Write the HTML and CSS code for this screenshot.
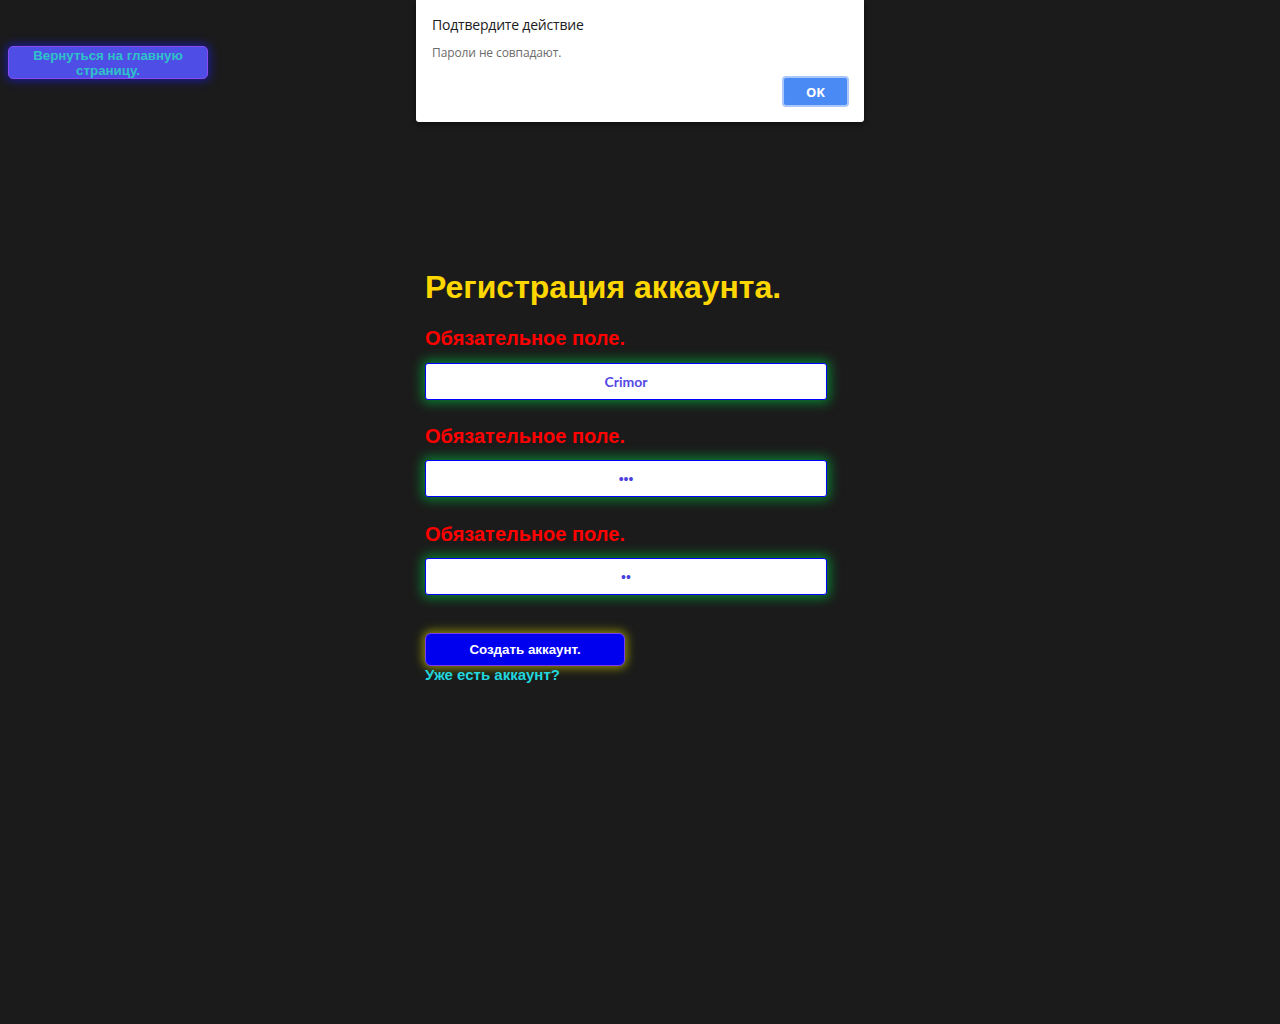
FILE: index.html
```html
<!DOCTYPE html>
<html lang="ru">
<head>
<meta charset="utf-8">
<title>Регистрация аккаунта</title>
<link rel="stylesheet" href="styles.css">
</head>
<body>
<div class="dialog">
  <div class="dialog-title">Подтвердите действие</div>
  <div class="dialog-msg">Пароли не совпадают.</div>
  <div class="dialog-actions"><button class="dialog-ok">OK</button></div>
</div>
<div class="page">
  <button class="back-btn">Вернуться на главную страницу.</button>
  <main class="form">
    <h1 class="title">Регистрация аккаунта.</h1>
    <div class="label">Обязательное поле.</div>
    <input class="field field-first" type="text" value="Crimor">
    <div class="label">Обязательное поле.</div>
    <input class="field field-pass field-mid" type="password" value="123">
    <div class="label">Обязательное поле.</div>
    <input class="field field-pass field-last" type="password" value="12">
    <button class="submit">Создать аккаунт.</button>
    <a class="login-link" href="#">Уже есть аккаунт?</a>
  </main>
</div>
</body>
</html>
```
FILE: styles.css
```css
html, body {
  margin: 0;
  padding: 0;
  background: #1b1b1b;
  font-family: "Liberation Sans", Arial, sans-serif;
}
.page {
  padding: 46px 0 0 8px;
  display: flex;
  flex-direction: column;
  align-items: flex-start;
}
.back-btn {
  width: 200px;
  height: 33px;
  padding: 0 4px;
  background: #4e4ee6;
  border: 1px solid #8a4cf2;
  border-radius: 5px;
  color: #2ec2c8;
  font-family: "Liberation Sans", Arial, sans-serif;
  font-weight: bold;
  font-size: 13.33px;
  line-height: 15px;
  box-shadow: 0 0 10px 2px rgba(30, 30, 255, 0.55);
}
.form {
  margin: 190px 0 0 417px;
  display: flex;
  flex-direction: column;
  align-items: flex-start;
  width: 402px;
}
.title {
  margin: 0;
  color: #ffd700;
  font-size: 32px;
  line-height: 37px;
  font-weight: bold;
}
.label {
  color: #ff0000;
  font-size: 20px;
  font-weight: bold;
  line-height: 24px;
  margin-top: 0;
}
.title + .label {
  margin-top: 20px;
}
.field {
  box-sizing: border-box;
  width: 402px;
  height: 37px;
  border: 1px solid #0000ff;
  border-radius: 3px;
  background: #ffffff;
  text-align: center;
  color: #5448e4;
  font-family: Lato, "Open Sans", sans-serif;
  font-weight: bold;
  font-size: 14px;
  outline: none;
  box-shadow: 0 0 12px 3px rgba(0, 170, 60, 0.7);
}
.field-first {
  margin: 13px 0 24px;
}
.field-mid {
  margin: 12px 0 25px;
}
.field-last {
  margin: 12px 0 38px;
}
.field-pass {
  font-family: "Liberation Sans", Arial, sans-serif;
  font-weight: normal;
  color: #4a3ee0;
}
.submit {
  width: 200px;
  height: 33px;
  background: #0000ee;
  border: 1px solid #7a3cf0;
  border-radius: 6px;
  color: #ffffff;
  font-family: "Liberation Sans", Arial, sans-serif;
  font-weight: bold;
  font-size: 13.33px;
  box-shadow: 0 0 10px 2px rgba(170, 170, 0, 0.8);
}
.login-link {
  color: #22d6de;
  font-weight: bold;
  font-size: 15px;
  line-height: 18px;
  text-decoration: none;
}
.dialog {
  position: absolute;
  left: 416px;
  top: 0;
  width: 448px;
  height: 122px;
  box-sizing: border-box;
  background: #ffffff;
  border-radius: 0 0 3px 3px;
  box-shadow: 0 2px 6px rgba(0, 0, 0, 0.5);
  padding: 15px 15px 0 16px;
  font-family: "Open Sans", "Noto Sans", sans-serif;
}
.dialog-title {
  font-size: 14px;
  line-height: 20px;
  color: #202020;
  letter-spacing: -0.2px;
}
.dialog-msg {
  margin-top: 10px;
  font-size: 12px;
  line-height: 16px;
  color: #6b6b6b;
  letter-spacing: -0.1px;
}
.dialog-actions {
  display: flex;
  justify-content: flex-end;
  margin-top: 15px;
}
.dialog-ok {
  width: 67px;
  height: 31px;
  background: #4a8af4;
  border: 2px solid #a9c7fa;
  border-radius: 4px;
  color: #ffffff;
  font-family: "Open Sans", "Noto Sans", sans-serif;
  font-weight: bold;
  font-size: 13px;
}
```
